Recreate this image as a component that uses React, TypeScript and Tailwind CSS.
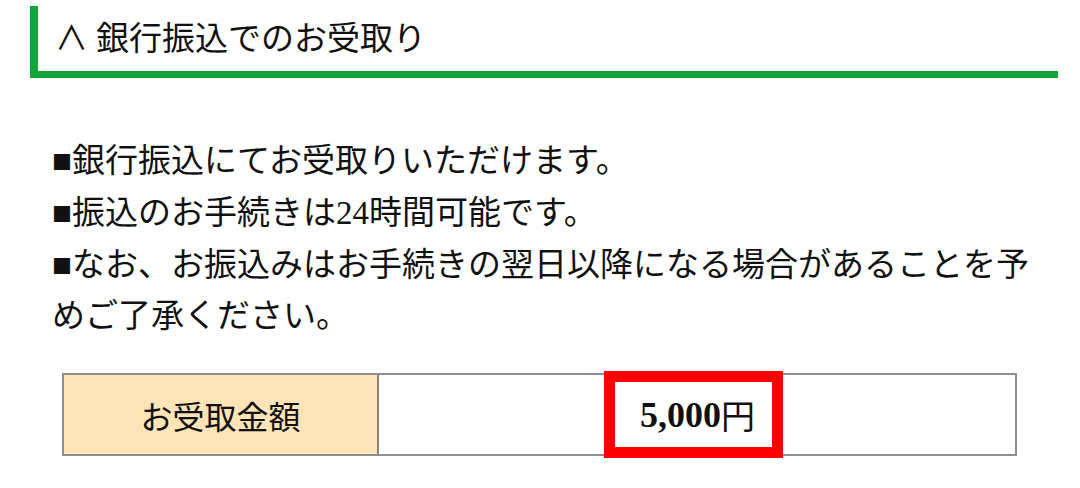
export default function App() {
  const jp = { fontFamily: '"Noto Sans CJK JP", sans-serif' };
  return (
    <div className="w-[1080px] h-[488px] bg-white overflow-hidden text-[#111]">
      <div className="pt-[6px] pl-[30px] pr-[22px]">
        <div
          className="h-[72px] border-l-[8px] border-b-[7px] border-[#13a33a] flex items-center pl-[17px] pb-[4px] text-[33px] leading-none"
          style={jp}
        >
          <span>∧</span>
          <span className="ml-[8px]">銀行振込でのお受取り</span>
        </div>
      </div>

      <div
        className="mt-[57px] pl-[52px] w-[1040px] text-[33px] leading-[51px]"
        style={{ fontFamily: '"Liberation Serif", "Noto Sans CJK JP", serif' }}
      >
        <p>
          <span className="font-['Liberation_Sans']">■</span>銀行振込にてお受取りいただけます。
        </p>
        <p>
          <span className="font-['Liberation_Sans']">■</span>振込のお手続きは24時間可能です。
        </p>
        <p>
          <span className="font-['Liberation_Sans']">■</span>なお、お振込みはお手続きの翌日以降になる場合があることを予めご了承ください。
        </p>
      </div>

      <div className="mt-[31px] ml-[62px] w-[955px] h-[83px] border-2 border-[#8e8e8e] flex">
        <div
          className="w-[315px] bg-[#ffe4b7] border-r-2 border-[#8a8378] flex items-center justify-center text-[32px]"
          style={jp}
        >
          お受取金額
        </div>
        <div className="flex-1 flex items-center">
          <div className="ml-[225px] w-[179px] h-[87px] shrink-0 border-[11px] border-[#ff0000] bg-white flex items-center justify-center pl-[8px]">
            <span
              className="text-[36px] font-bold leading-none"
              style={{ fontFamily: '"Liberation Serif", serif' }}
            >
              5,000
            </span>
            <span className="text-[34px] leading-none" style={jp}>
              円
            </span>
          </div>
        </div>
      </div>
    </div>
  );
}
